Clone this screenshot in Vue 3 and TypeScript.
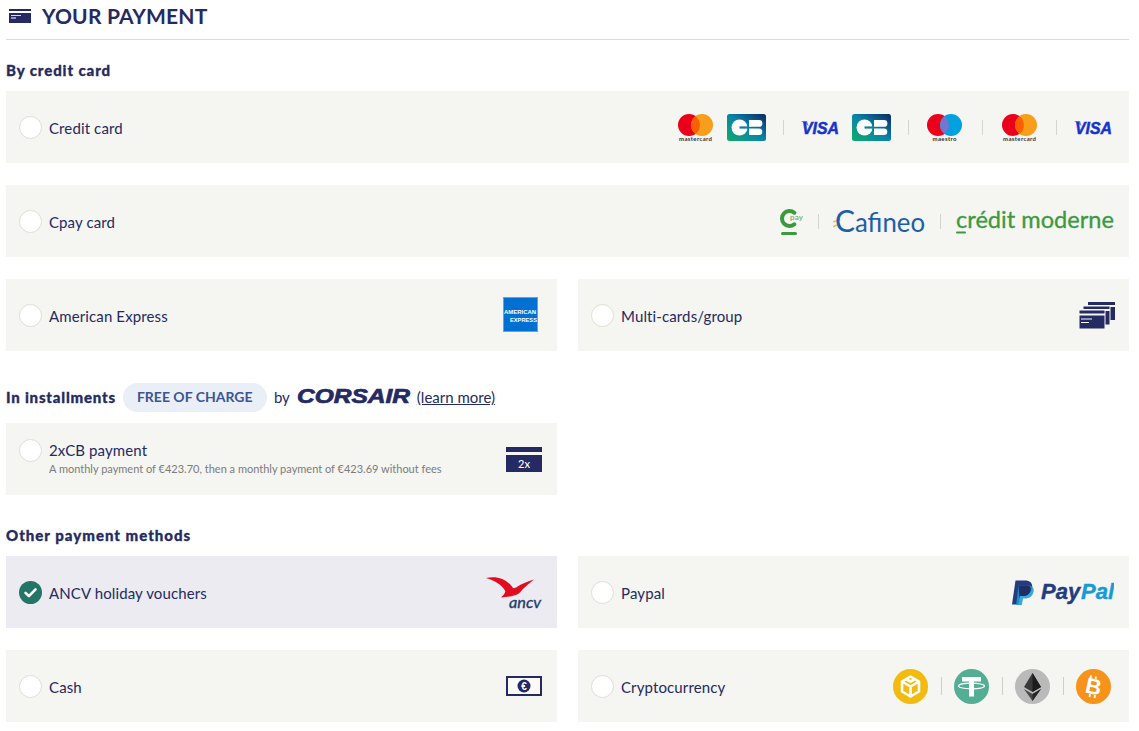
<script setup lang="ts">
</script>

<template>
  <div class="page">
    <svg class="defs" width="0" height="0" aria-hidden="true">
      <defs>
        <linearGradient id="cbGrad" x1="0" y1="1" x2="1" y2="0">
          <stop offset="0" stop-color="#10ac68" />
          <stop offset="0.5" stop-color="#0a84ab" />
          <stop offset="1" stop-color="#0a2a60" />
        </linearGradient>
        <symbol id="mc" viewBox="0 0 39 27">
          <circle cx="13" cy="11" r="11" fill="#eb001b" />
          <circle cx="26" cy="11" r="11" fill="#f79e1b" />
          <path d="M19.5 2.2a11 11 0 0 1 0 17.6a11 11 0 0 1 0-17.6z" fill="#ff5f00" />
          <text x="19.5" y="27" text-anchor="middle" class="tiny" textLength="33">mastercard</text>
        </symbol>
        <symbol id="cb" viewBox="0 0 39 27">
          <rect width="39" height="27" rx="2.5" fill="url(#cbGrad)" />
          <circle cx="12.5" cy="13.5" r="8" fill="#fff" />
          <rect x="12.5" y="12.4" width="9" height="2.2" fill="#0a80a4" />
          <path d="M22 6H32a3.4 3.4 0 0 1 0 6.800H22Z M22 14.400H32a3.300 3.300 0 0 1 0 6.600H22Z" fill="#fff" />
        </symbol>
        <symbol id="visa" viewBox="0 0 39 16">
          <polygon points="0,2 6,2 7.500,7" fill="#6c7fe0" />
          <text x="1" y="14.5" class="visa" textLength="37" lengthAdjust="spacingAndGlyphs">VISA</text>
        </symbol>
      </defs>
    </svg>

    <header class="head">
      <svg class="head-icon" width="22" height="14" viewBox="0 0 22 14">
        <rect width="22" height="2" fill="#252a62" />
        <rect y="4" width="22" height="10" fill="#252a62" />
        <rect x="2" y="6" width="10" height="1" fill="#d9daea" />
        <rect x="2" y="8.5" width="5" height="1" fill="#fff" />
      </svg>
      <h1>YOUR PAYMENT</h1>
    </header>

    <h2 class="title first">By credit card</h2>
    <div class="grid">
      <div class="opt wide">
        <span class="radio"></span>
        <span class="label">Credit card</span>
        <div class="logos">
          <svg width="39" height="27"><use href="#mc" /></svg>
          <svg class="gap" width="39" height="27"><use href="#cb" /></svg>
          <i class="sep"></i>
          <svg width="39" height="16"><use href="#visa" /></svg>
          <svg class="gap" width="39" height="27"><use href="#cb" /></svg>
          <i class="sep"></i>
          <svg width="39" height="27" viewBox="0 0 39 27">
            <circle cx="12" cy="11" r="11" fill="#eb001b" />
            <circle cx="25" cy="11" r="11" fill="#00a1df" />
            <path d="M18.5 2.2a11 11 0 0 1 0 17.6a11 11 0 0 1 0-17.6z" fill="#7375cf" />
            <text x="18.5" y="27" text-anchor="middle" class="tiny" textLength="24">maestro</text>
          </svg>
          <i class="sep"></i>
          <svg width="39" height="27"><use href="#mc" /></svg>
          <i class="sep"></i>
          <svg width="39" height="16"><use href="#visa" /></svg>
        </div>
      </div>

      <div class="opt wide">
        <span class="radio"></span>
        <span class="label">Cpay card</span>
        <div class="logos over2">
          <svg width="24" height="28" viewBox="0 0 24 28">
            <path d="M14.300 5.750A7.500 7.500 0 1 0 14.300 17.250" fill="none" stroke="#3c9a3e" stroke-width="4" stroke-linecap="round" />
            <rect x="1" y="25" width="16" height="3" rx="1.5" fill="#3c9a3e" />
            <text x="10" y="13" class="pay" textLength="13">pay</text>
          </svg>
          <i class="sep narrow"></i>
          <svg width="93" height="40" viewBox="0 0 93 40">
            <path d="M0 21L7 18.500M0 25.500L7 23" stroke="#f2c230" stroke-width="1.600" />
            <text x="2" y="31" class="cafineo-c">C</text>
            <text x="22" y="31" class="cafineo" textLength="70" lengthAdjust="spacingAndGlyphs">afineo</text>
          </svg>
          <i class="sep narrow"></i>
          <svg width="160" height="40" viewBox="0 0 160 40">
            <text x="1" y="27" class="credit" textLength="158" lengthAdjust="spacingAndGlyphs">crédit moderne</text>
            <rect x="1" y="30.500" width="10" height="2" rx="1" fill="#3c9a3e" />
          </svg>
        </div>
      </div>

      <div class="opt">
        <span class="radio"></span>
        <span class="label">American Express</span>
        <div class="logos amex-pos">
          <svg width="35" height="35" viewBox="0 0 35 35">
            <rect width="35" height="35" fill="#0170d3" />
            <rect x=".5" y=".5" width="34" height="34" fill="none" stroke="#5ea3e4" />
            <text x="1" y="17" class="amex" textLength="32" lengthAdjust="spacingAndGlyphs">AMERICAN</text>
            <text x="7" y="24.500" class="amex" textLength="27" lengthAdjust="spacingAndGlyphs">EXPRESS</text>
          </svg>
        </div>
      </div>

      <div class="opt">
        <span class="radio"></span>
        <span class="label">Multi-cards/group</span>
        <div class="logos over2">
          <svg width="36" height="27" viewBox="0 0 36 27">
            <rect x="9" y="0" width="27" height="18" fill="#252a62" />
            <rect x="9" y="3" width="27" height="2" fill="#f5f5f1" />
            <rect x="4" y="4" width="27" height="19" fill="#252a62" stroke="#f5f5f1" />
            <rect x="4" y="7" width="27" height="2" fill="#f5f5f1" />
            <rect x="0" y="8" width="26" height="19" fill="#252a62" stroke="#f5f5f1" />
            <rect x="0" y="11.5" width="26" height="2" fill="#f5f5f1" />
            <rect x="2" y="16" width="11" height="2" fill="#8d90b5" />
            <rect x="2" y="20" width="8" height="1" fill="#fff" />
          </svg>
        </div>
      </div>
    </div>

    <div class="title-row">
      <h2 class="title inline">In installments</h2>
      <span class="badge">FREE OF CHARGE</span>
      <span class="by">by</span>
      <svg width="114" height="26" viewBox="0 0 114 26">
        <text x="0" y="18" class="corsair" textLength="113" lengthAdjust="spacingAndGlyphs">CORSAIR</text>
      </svg>
      <a class="learn">(learn more)</a>
    </div>
    <div class="grid">
      <div class="opt">
        <span class="radio top"></span>
        <div class="stack">
          <span class="label">2xCB payment</span>
          <span class="sub">A monthly payment of €423.70, then a monthly payment of €423.69 without fees</span>
        </div>
        <div class="logos over1">
          <svg width="36" height="25" viewBox="0 0 36 25">
            <rect width="36" height="5" fill="#252a62" />
            <rect y="8" width="36" height="17" fill="#252a62" />
            <text x="18" y="21" text-anchor="middle" class="twox">2x</text>
          </svg>
        </div>
      </div>
    </div>

    <h2 class="title other">Other payment methods</h2>
    <div class="grid">
      <div class="opt selected">
        <span class="radio checked">
          <svg width="23" height="23" viewBox="0 0 23 23">
            <path d="M6.5 11.8l3.4 3.4 6.6-6.8" fill="none" stroke="#fff" stroke-width="2.6" stroke-linecap="round" stroke-linejoin="round" />
          </svg>
        </span>
        <span class="label">ANCV holiday vouchers</span>
        <div class="logos over1">
          <svg width="56" height="36" viewBox="0 0 56 36">
            <path transform="translate(0 1.500)" d="M0 2.500C10 0 20 3 26 11C27 13 28 13 30 12C36 8 42 6 48 4C43 8 37 13 34 17C30 21 22 21 15 22C18 19 20 17 19 15C15 9 9 5 0 2.500Z" fill="#e30b20" />
            <text x="23" y="34" class="ancv" textLength="32" lengthAdjust="spacingAndGlyphs">ancv</text>
          </svg>
        </div>
      </div>

      <div class="opt">
        <span class="radio"></span>
        <span class="label">Paypal</span>
        <div class="logos over1">
          <svg width="103" height="26" viewBox="0 0 103 26">
            <g transform="translate(1 1.500)">
              <path d="M3.500 0H13C18.500 0 21 3 20 8C19 13 15 15.500 10.500 15.500H8L6.500 24H0Z" fill="#253b80" />
              <path d="M6.500 5H15.500C20.500 5 22.500 7.500 21.500 11.500C20.500 16 17 18 13 18H11L9.800 25H4Z" fill="#179bd7" opacity=".85" />
              <path d="M6.500 5H16.800C18.800 6.300 19.500 8.500 18 12C16 15 13.500 15.500 10.500 15.500H8L7.500 18Z" fill="#222d65" />
            </g>
            <text x="30" y="19.500" class="pp pay-d">Pay</text>
            <text x="70" y="19.500" class="pp pay-l">Pal</text>
          </svg>
        </div>
      </div>

      <div class="opt">
        <span class="radio"></span>
        <span class="label">Cash</span>
        <div class="logos over1">
          <svg width="36" height="20" viewBox="0 0 36 20">
            <rect x="1" y="1" width="34" height="18" fill="#fafaf8" stroke="#252a62" stroke-width="2" />
            <circle cx="18" cy="10" r="6.500" fill="#252a62" />
            <text x="18" y="13.500" text-anchor="middle" class="euro">€</text>
          </svg>
        </div>
      </div>

      <div class="opt">
        <span class="radio"></span>
        <span class="label">Cryptocurrency</span>
        <div class="logos crypto">
          <svg width="35" height="35" viewBox="0 0 35 35">
            <circle cx="17.500" cy="17.500" r="17.500" fill="#f3ba12" />
            <path d="M17.500 7.500L26 12.500V22.500L17.500 27.500L9 22.500V12.500ZM9 12.500L17.500 17.500L26 12.500M17.500 17.500V27.500M13 10L17.500 12.500L22 10" fill="none" stroke="#fff" stroke-width="2.600" stroke-linejoin="round" />
          </svg>
          <i class="sep tight"></i>
          <svg width="35" height="35" viewBox="0 0 35 35">
            <circle cx="17.500" cy="17.500" r="17.500" fill="#53ae94" />
            <path d="M8 8H27V12.500H20V27.500H15V12.500H8Z" fill="#fff" />
            <ellipse cx="17.500" cy="17" rx="13" ry="2.800" fill="none" stroke="#fff" stroke-width="1.200" />
          </svg>
          <i class="sep tight"></i>
          <svg width="35" height="35" viewBox="0 0 35 35">
            <circle cx="17.500" cy="17.500" r="17.500" fill="#bababa" />
            <polygon points="17.500,4 9,18 17.500,23 26,18" fill="#3a3a3a" />
            <polygon points="17.500,4 26,18 17.500,23" fill="#1c1c1c" />
            <polygon points="9,20 17.500,25 26,20 17.500,32" fill="#4a4a4a" />
            <polygon points="17.500,25 26,20 17.500,32" fill="#262626" />
          </svg>
          <i class="sep tight"></i>
          <svg width="35" height="35" viewBox="0 0 35 35">
            <circle cx="17.500" cy="17.500" r="17.500" fill="#f7931a" />
            <text x="17.500" y="25" text-anchor="middle" class="btc" transform="rotate(12 17.500 17.500)">B</text>
            <path d="M15 6.500L14.500 9.500M20 7.500L19.500 10M14 25L13.500 28M19 26L18.500 29" stroke="#fff" stroke-width="1.800" />
          </svg>
        </div>
      </div>
    </div>
  </div>
</template>

<style>
body {
  background: #fff;
}
</style>

<style scoped>
.page {
  box-sizing: border-box;
  width: 1139px;
  padding: 0 10px 0 6px;
  font-family: Lato, "Liberation Sans", sans-serif;
  color: #252a62;
}
.defs {
  position: absolute;
}
.tiny {
  font: 700 6px Lato, sans-serif;
  fill: #333;
}
.visa {
  font: italic 700 17px "Liberation Sans", sans-serif;
  fill: #1434cb;
  stroke: #1434cb;
  stroke-width: 0.5;
}
.pay {
  font: 700 8px Lato, sans-serif;
  fill: #7fb682;
}
.cafineo-c {
  font: 400 30px Lato, sans-serif;
  fill: #1c5fa8;
}
.cafineo {
  font: 400 26px Lato, sans-serif;
  fill: #1c5fa8;
}
.credit {
  font: 400 23px Lato, sans-serif;
  fill: #3c9a3e;
  stroke: #3c9a3e;
  stroke-width: 0.3;
}
.amex {
  font: 700 5.800px "Liberation Sans", sans-serif;
  fill: #fff;
}
.corsair {
  font: italic 700 20px "Liberation Sans", sans-serif;
  fill: #252a62;
  stroke: #252a62;
  stroke-width: 0.7;
}
.twox {
  font: 500 11px Lato, sans-serif;
  fill: #fff;
}
.ancv {
  font: italic 400 15px Lato, sans-serif;
  fill: #1f3a6b;
  stroke: #1f3a6b;
  stroke-width: 0.3;
}
.pp {
  font: italic 700 22px "Liberation Sans", sans-serif;
  stroke-width: 0.4;
}
.pay-d {
  fill: #253b80;
  stroke: #253b80;
}
.pay-l {
  fill: #179bd7;
  stroke: #179bd7;
}
.euro {
  font: 700 10px "Liberation Sans", sans-serif;
  fill: #fff;
}
.btc {
  font: 700 22px "Liberation Sans", sans-serif;
  fill: #fff;
}
.head {
  display: flex;
  align-items: center;
  height: 32px;
  padding: 0 0 7px 3px;
  border-bottom: 1px solid #dddcd3;
}
.head-icon {
  margin-right: 11px;
}
h1 {
  margin: 0;
  font-size: 21px;
  font-weight: 700;
  letter-spacing: 0.2px;
  line-height: 32px;
}
.title {
  margin: 0;
  font-size: 15px;
  font-weight: 900;
  line-height: 20px;
  letter-spacing: 0.9px;
  -webkit-text-stroke: 0.3px #252a62;
}
.title.first {
  margin: 20px 0 11px;
}
.title.other {
  margin: 30px 0 11px;
  letter-spacing: 1px;
}
.title-row {
  display: flex;
  align-items: center;
  height: 29px;
  margin: 32px 0 11px;
}
.title.inline {
  margin: 0 7px 2px 0;
  letter-spacing: 0.8px;
}
.badge {
  display: flex;
  align-items: center;
  box-sizing: border-box;
  width: 144px;
  height: 29px;
  padding: 0 14px 2px;
  border-radius: 15px;
  background: #e9eef7;
  color: #3d5494;
  font-size: 14px;
  font-weight: 700;
}
.by {
  margin: 0 7px 2px;
  font-size: 15px;
}
.learn {
  margin: 0 0 2px 6px;
  font-size: 15px;
  text-decoration: underline;
}
.grid {
  display: grid;
  grid-template-columns: 551px 551px;
  gap: 22px 21px;
}
.opt {
  display: flex;
  align-items: center;
  box-sizing: border-box;
  height: 72px;
  padding: 0 16px 0 13px;
  background: #f5f5f1;
}
.opt.wide {
  grid-column: span 2;
}
.opt.selected {
  background: #ebebf1;
}
.radio {
  flex: none;
  box-sizing: border-box;
  width: 23px;
  height: 23px;
  border: 1px solid #e0dfd3;
  border-radius: 50%;
  background: #fff;
}
.radio.top {
  align-self: flex-start;
  margin-top: 16px;
}
.radio.checked {
  border: 0;
  background: #247566;
}
.radio svg {
  display: block;
}
.label {
  margin: 1px 0 0 7px;
  font-size: 15px;
  line-height: 24px;
  letter-spacing: 0.12px;
}
.stack {
  display: flex;
  flex-direction: column;
  align-self: flex-start;
  margin-top: 16px;
}
.stack .label {
  line-height: 22px;
  margin-top: 0;
}
.sub {
  margin: 1px 0 0 7px;
  color: #7c7c7c;
  font-size: 11px;
  line-height: 14px;
}
.logos {
  display: flex;
  align-items: center;
  margin-left: auto;
}
.logos svg {
  display: block;
  flex: none;
}
.gap {
  margin-left: 12px;
}
.sep {
  flex: none;
  width: 1px;
  height: 15px;
  margin: 0 17px;
  background: #d4d4d0;
}
.sep.narrow {
  margin: 0 14px;
}
.sep.tight {
  height: 18px;
  margin: 0 12px 0 13px;
  background: #cfcfca;
}
.amex-pos {
  margin-top: -1px;
  margin-right: 3px;
}
.over2 {
  margin-right: -2px;
}
.over1 {
  margin-right: -1px;
}
.crypto {
  margin-right: 2.500px;
}
</style>
